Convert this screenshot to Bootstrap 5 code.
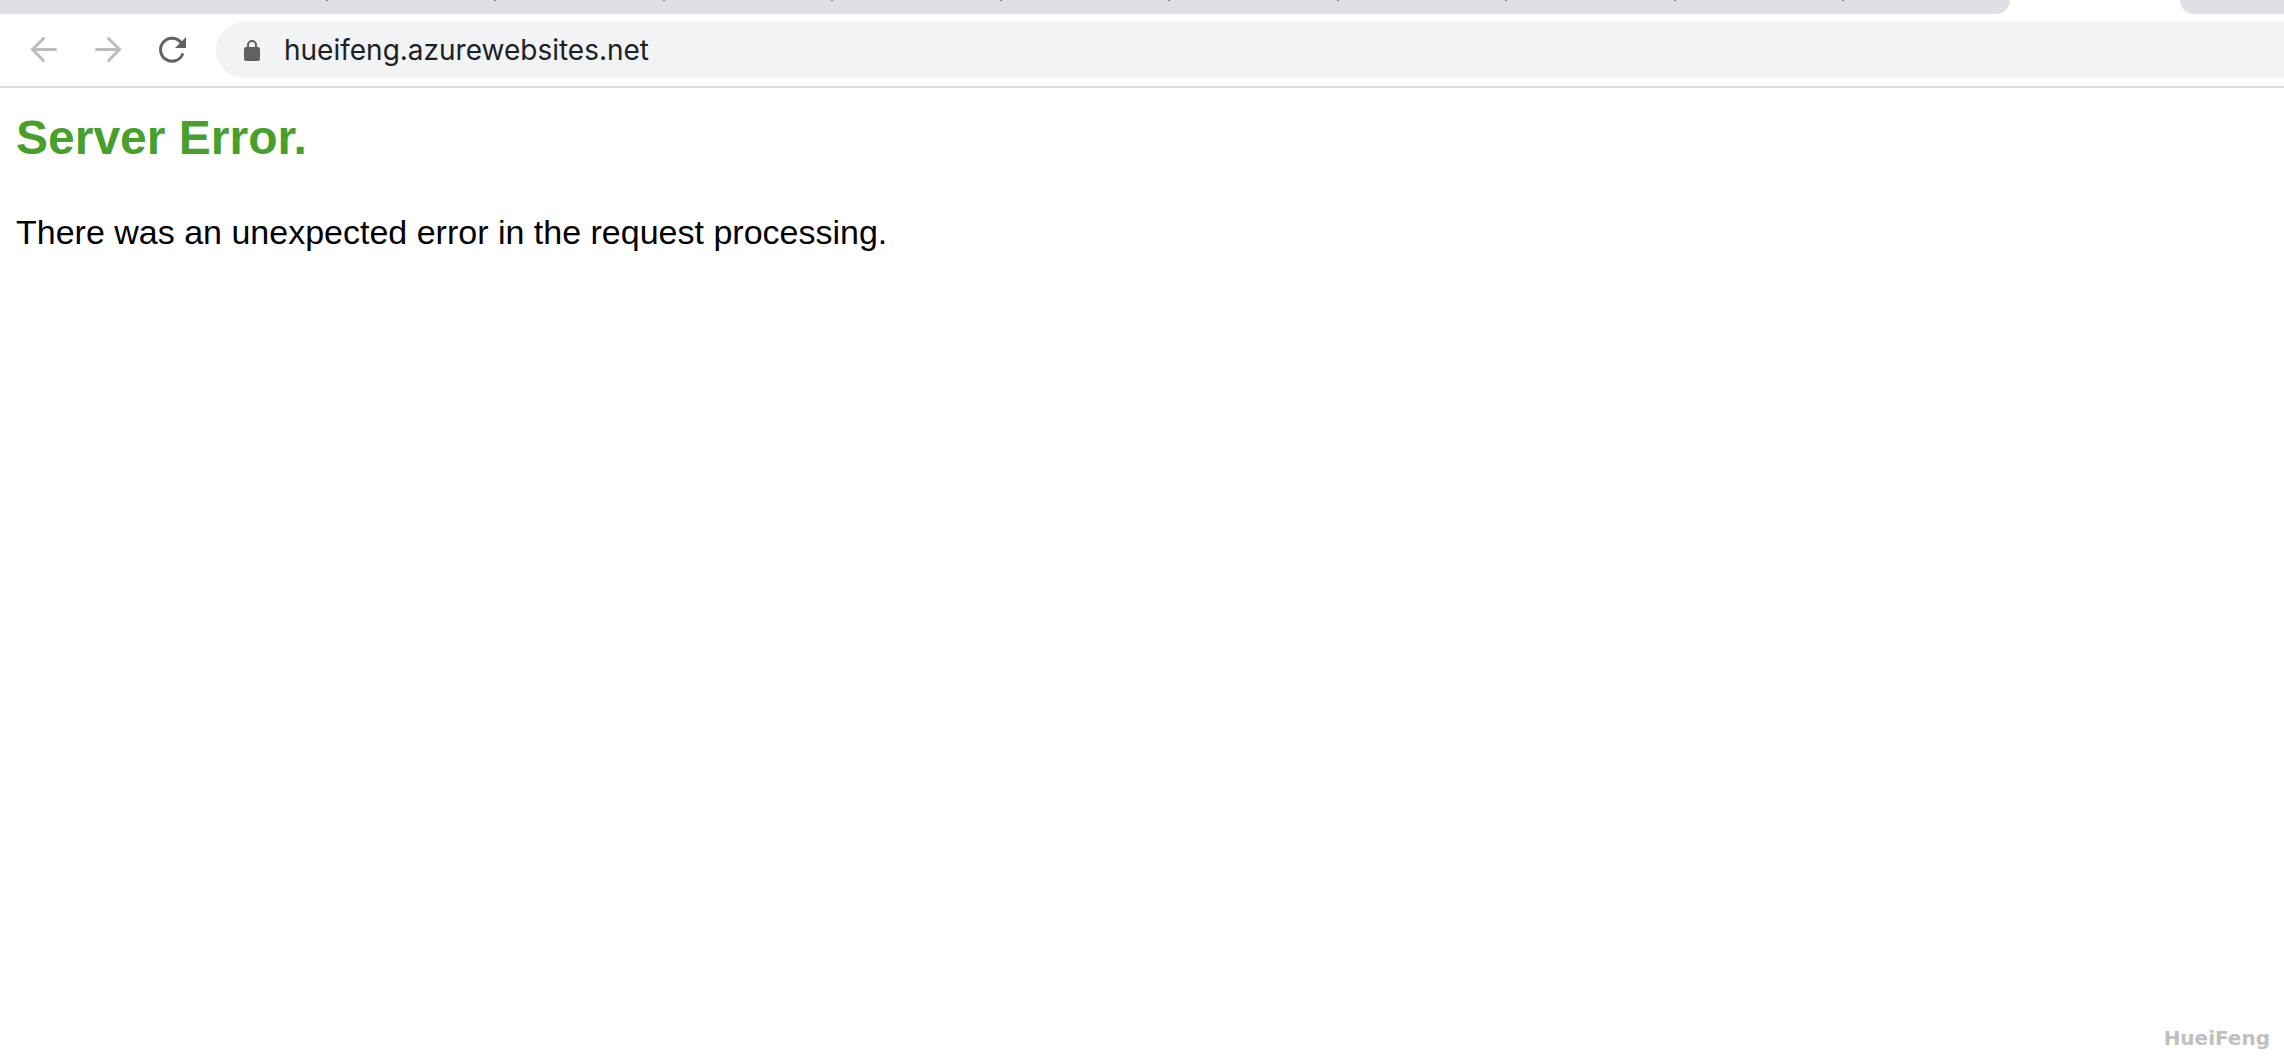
<!DOCTYPE html>
<html lang="en">
<head>
<meta charset="utf-8">
<meta name="viewport" content="width=device-width, initial-scale=1">
<title>Server Error</title>
<link href="https://cdn.jsdelivr.net/npm/bootstrap@5.3.0/dist/css/bootstrap.min.css" rel="stylesheet">
<style>
body { font-family: "Liberation Sans", sans-serif; color: #000; background: #fff; }
.tab-strip { height: 14px; }
.tabs-left { background: #dee0e4; border-bottom-right-radius: 16px; padding-left: 326px; padding-right: 166px; }
.tabs-right { background: #dee0e4; border-bottom-left-radius: 16px; width: 104px; }
.tab-active { width: 170px; }
.tab-tick { width: 2px; height: 1px; background: #85878b; }
.toolbar { height: 74px; border-bottom: 2px solid #dcdde1; padding-left: 24px; }
.tool-btn { width: 40px; height: 40px; color: #5f6368; line-height: 0; }
.tool-btn:disabled { color: #babcbe; opacity: 1; border: 0; }
.omnibox { height: 56px; background: #f1f3f4; border-radius: 28px 0 0 28px; padding-left: 24px; gap: 20px; }
.url-input { font-family: Inter, sans-serif; font-size: 28px; line-height: 40px; color: #202124; }
.error-title { font-size: 48px; line-height: 60px; font-weight: 700; color: #479f2c; margin-bottom: 44px; }
.error-text { font-size: 34px; line-height: 40px; }
.signature { font-family: "DejaVu Sans", sans-serif; font-size: 20px; line-height: 24px; font-weight: 700; color: #c0c0c0; padding: 14px; }
</style>
</head>
<body class="d-flex flex-column min-vh-100">
<header>
  <div class="tab-strip d-flex">
    <div class="tabs-left flex-grow-1 d-flex justify-content-between">
      <span class="tab-tick"></span><span class="tab-tick"></span><span class="tab-tick"></span><span class="tab-tick"></span><span class="tab-tick"></span><span class="tab-tick"></span><span class="tab-tick"></span><span class="tab-tick"></span><span class="tab-tick"></span><span class="tab-tick"></span>
    </div>
    <div class="tab-active"></div>
    <div class="tabs-right"></div>
  </div>
  <nav class="toolbar d-flex align-items-center" aria-label="Browser">
    <div class="d-flex gap-4 me-4">
      <button class="tool-btn btn p-0 border-0" type="button" aria-label="Back" disabled>
        <svg width="40" height="40" viewBox="0 0 40 40" fill="none" stroke="currentColor" stroke-width="3" stroke-linecap="round"><path d="M31.500 19.500H9M19.500 8.500L8.500 19.500l11 11"/></svg>
      </button>
      <button class="tool-btn btn p-0 border-0" type="button" aria-label="Forward" disabled>
        <svg width="40" height="40" viewBox="0 0 40 40" fill="none" stroke="currentColor" stroke-width="3" stroke-linecap="round"><path d="M8.500 19.500H31M20.500 8.500l11 11-11 11"/></svg>
      </button>
      <button class="tool-btn btn p-0 border-0" type="button" aria-label="Reload">
        <svg width="40" height="40" viewBox="0 0 40 40" fill="none" stroke="currentColor" stroke-width="3" stroke-linecap="round"><path d="M30.500 24.500A11.500 11.500 0 1 1 29 12.500"/><path d="M34 7v11H23z" fill="currentColor" stroke="none"/></svg>
      </button>
    </div>
    <div class="omnibox flex-grow-1 d-flex align-items-center">
      <svg width="24" height="24" viewBox="0 0 24 24" aria-hidden="true"><path d="M8 11V7a4 4 0 0 1 8 0v4" fill="none" stroke="#606163" stroke-width="2"/><rect x="4" y="9" width="16" height="14" rx="2" fill="#606163"/></svg>
      <input class="url-input flex-grow-1 border-0 bg-transparent p-0" type="text" aria-label="Address" value="hueifeng.azurewebsites.net">
    </div>
  </nav>
</header>
<main class="flex-grow-1 px-3 pt-3 mt-1">
  <h1 class="error-title">Server Error.</h1>
  <p class="error-text mb-0">There was an unexpected error in the request processing.</p>
</main>
<footer class="signature text-end">HueiFeng</footer>
<script src="https://cdn.jsdelivr.net/npm/bootstrap@5.3.0/dist/js/bootstrap.bundle.min.js"></script>
</body>
</html>
